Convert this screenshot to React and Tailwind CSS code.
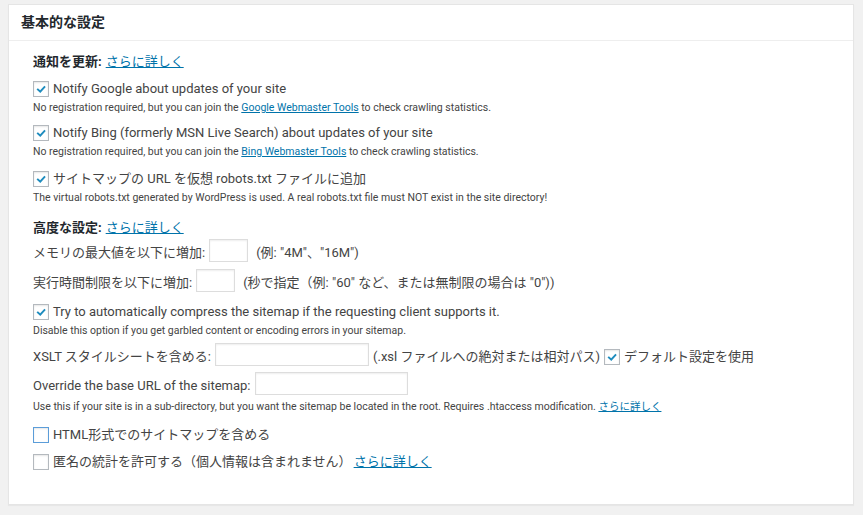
import React from 'react';

const font = { fontFamily: 'Roboto, "Noto Sans CJK JP", sans-serif' };

const Check = ({ checked, focus }) => (
    <span
        className={`inline-flex items-center justify-center w-4 h-4 shrink-0 bg-white border ${focus ? 'border-[#5b9dd9] shadow-[0_0_2px_rgba(30,140,190,0.8)]' : 'border-[#b4b9be]'} shadow-[inset_0_1px_2px_rgba(0,0,0,0.1)]`}
    >
        {checked && (
            <svg width="14" height="14" viewBox="0 0 20 20">
                <path d="M14.8 5.2 L16.8 7 L9 15.8 L3.6 10.8 L5.5 8.8 L8.8 11.9 Z" fill="#1e8cbe" />
            </svg>
        )}
    </span>
);

const Link = ({ children }) => (
    <a href="#" className="text-[#0073aa] underline">{children}</a>
);

const CheckRow = ({ checked, focus, children, className = '' }) => (
    <label className={`flex items-center h-5 text-[13px] text-[#444] ${className}`}>
        <Check checked={checked} focus={focus} />
        <span className="ml-1">{children}</span>
    </label>
);

// small grey help line under an option
const Desc = ({ children }) => (
    <p className="h-4 mt-px leading-4 text-[10.5px] text-[#444]">{children}</p>
);

const Input = ({ w }) => (
    <span className={`inline-block h-[23px] bg-white border border-[#ddd] shadow-[inset_0_1px_2px_rgba(0,0,0,0.07)] ${w}`} />
);

export default function App() {
    return (
        <div className="w-[863px] h-[515px] bg-[#f1f1f1] pt-1 px-2" style={font}>
            <div className="w-[846px] h-[501px] bg-white border border-[#e5e5e5] shadow-[0_1px_1px_rgba(0,0,0,0.04)]">
                <div className="h-9 border-b border-[#eee] px-3 flex items-center">
                    <h2 className="text-[14px] font-bold text-[#23282d]">基本的な設定</h2>
                </div>

                <div className="pl-6 pt-[11px] flex flex-col">
                    <div className="h-5 flex items-center text-[13px] text-[#444]">
                        <b className="font-bold text-[#23282d]">通知を更新:</b>
                        <span className="ml-1"><Link>さらに詳しく</Link></span>
                    </div>

                    <CheckRow checked className="mt-[7px]">Notify Google about updates of your site</CheckRow>
                    <Desc>No registration required, but you can join the <Link>Google Webmaster Tools</Link> to check crawling statistics.</Desc>

                    <CheckRow checked className="mt-[7px]">Notify Bing (formerly MSN Live Search) about updates of your site</CheckRow>
                    <Desc>No registration required, but you can join the <Link>Bing Webmaster Tools</Link> to check crawling statistics.</Desc>

                    <CheckRow checked className="mt-[9px]">サイトマップの URL を仮想 robots.txt ファイルに追加</CheckRow>
                    <Desc>The virtual robots.txt generated by WordPress is used. A real robots.txt file must NOT exist in the site directory!</Desc>

                    <div className="h-5 mt-3 flex items-center text-[13px] text-[#444]">
                        <b className="font-bold text-[#23282d]">高度な設定:</b>
                        <span className="ml-1"><Link>さらに詳しく</Link></span>
                    </div>

                    <div className="h-6 mt-[3px] flex items-center text-[13px] text-[#444]">
                        <span>メモリの最大値を以下に増加:</span>
                        <span className="ml-1"><Input w="w-[39px]" /></span>
                        <span className="ml-2">(例: "4M"、"16M")</span>
                    </div>

                    <div className="h-6 mt-[6px] flex items-center text-[13px] text-[#444]">
                        <span>実行時間制限を以下に増加:</span>
                        <span className="ml-1"><Input w="w-[39px]" /></span>
                        <span className="ml-2">(秒で指定（例: "60" など、または無制限の場合は "0"))</span>
                    </div>

                    <CheckRow checked className="mt-[7px]">Try to automatically compress the sitemap if the requesting client supports it.</CheckRow>
                    <Desc>Disable this option if you get garbled content or encoding errors in your sitemap.</Desc>

                    <div className="h-6 mt-[6px] flex items-center text-[13px] text-[#444]">
                        <span>XSLT スタイルシートを含める:</span>
                        <span className="ml-1"><Input w="w-[154px]" /></span>
                        <span className="ml-1">(.xsl ファイルへの絶対または相対パス)</span>
                        <span className="ml-1 flex items-center"><Check checked /><span className="ml-1">デフォルト設定を使用</span></span>
                    </div>

                    <div className="h-6 mt-[5px] flex items-center text-[13px] text-[#444]">
                        <span>Override the base URL of the sitemap:</span>
                        <span className="ml-1"><Input w="w-[153px]" /></span>
                    </div>
                    <Desc>Use this if your site is in a sub-directory, but you want the sitemap be located in the root. Requires .htaccess modification. <Link>さらに詳しく</Link></Desc>

                    <CheckRow focus className="mt-[10px]">HTML形式でのサイトマップを含める</CheckRow>

                    <label className="flex items-center h-5 mt-[7px] text-[13px] text-[#444]">
                        <Check />
                        <span className="ml-1">匿名の統計を許可する（個人情報は含まれません）</span>
                        <span className="ml-[2px]"><Link>さらに詳しく</Link></span>
                    </label>
                </div>
            </div>
        </div>
    );
}
